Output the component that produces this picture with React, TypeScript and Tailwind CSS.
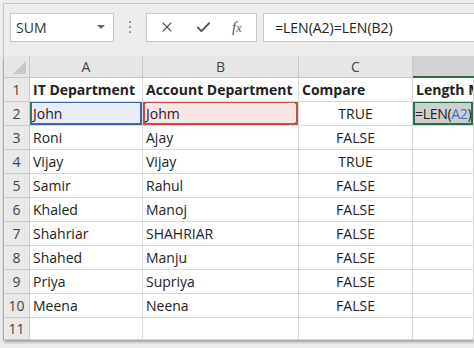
import { X, Check } from "lucide-react";

const rows: [string, string, string][] = [
  ["John", "Johm", "TRUE"],
  ["Roni", "Ajay", "FALSE"],
  ["Vijay", "Vijay", "TRUE"],
  ["Samir", "Rahul", "FALSE"],
  ["Khaled", "Manoj", "FALSE"],
  ["Shahriar", "SHAHRIAR", "FALSE"],
  ["Shahed", "Manju", "FALSE"],
  ["Priya", "Supriya", "FALSE"],
  ["Meena", "Neena", "FALSE"],
  ["", "", ""],
];

const cols = "grid grid-cols-[26px_113px_156px_114px_1fr]";
const cell = "border-r border-b border-[#d8d8d8] flex items-center px-[3px] whitespace-nowrap overflow-hidden";
const rowHead = "border-r border-b border-[#c8c8c8] bg-[#e9e9e9] flex items-center justify-center text-[#444]";

function Handle({ pos }: { pos: string }) {
  return <span className={`absolute w-[5px] h-[5px] bg-[#c0504d] ${pos}`} />;
}

export default function App() {
  return (
    <div
      className="w-[474px] h-[348px] overflow-hidden bg-[#ececec] pt-[3px] pl-[3px] text-[14px] text-[#222]"
      style={{ fontFamily: '"Open Sans", "Noto Sans", sans-serif' }}
    >
      <div className="border-t border-l border-[#c4c4c4] bg-[#ececec]">
        {/* formula bar */}
        <div className="flex items-center h-[52px] pl-[6px] pb-[6px]">
          <div className="w-[104px] h-[29px] bg-white border border-[#c6c6c6] flex items-center justify-between pl-[5px] pr-[8px]">
            <span className="text-[#333]">SUM</span>
            <span className="w-0 h-0 border-l-[4px] border-r-[4px] border-t-[4px] border-l-transparent border-r-transparent border-t-[#666]" />
          </div>
          <div className="w-[32px] flex flex-col items-center gap-[3px]">
            <span className="w-[2px] h-[2px] bg-[#9a9a9a]" />
            <span className="w-[2px] h-[2px] bg-[#9a9a9a]" />
            <span className="w-[2px] h-[2px] bg-[#9a9a9a]" />
          </div>
          <div className="w-[111px] h-[29px] bg-white border border-[#c6c6c6] flex items-center pl-[12px] gap-[20px] text-[#555]">
            <X size={16} strokeWidth={1.6} />
            <Check size={17} strokeWidth={2.6} />
            <span
              className="italic text-[15px] text-[#555] leading-none"
              style={{ fontFamily: '"Liberation Serif", serif' }}
            >
              f<span className="text-[12px]">x</span>
            </span>
          </div>
          <div className="ml-[6px] flex-1 h-[29px] bg-white border border-[#c6c6c6] border-r-0 flex items-center pl-[11px] text-[#222]">
            =LEN(A2)=LEN(B2)
          </div>
        </div>

        {/* sheet */}
        <div className="shadow-[0_2px_3px_rgba(0,0,0,0.35)]">
          <div className={`${cols} h-[22px] text-[#444]`}>
            <div className="relative border-r border-b border-[#c8c8c8] bg-[#e6e6e6]">
              <span className="absolute right-[3px] bottom-[3px] w-0 h-0 border-b-[13px] border-l-[13px] border-b-[#c8c8c8] border-l-transparent" />
            </div>
            <div className="border-r border-b border-[#c8c8c8] bg-[#e6e6e6] flex items-center justify-center">A</div>
            <div className="border-r border-b border-[#c8c8c8] bg-[#e6e6e6] flex items-center justify-center">B</div>
            <div className="border-r border-b border-[#c8c8c8] bg-[#e6e6e6] flex items-center justify-center">C</div>
            <div className="border-b-2 border-[#217346] bg-[#d2d2d2]" />
          </div>

          <div className={`${cols} h-[24px] font-bold`}>
            <div className={`${rowHead} font-normal`}>1</div>
            <div className={`${cell} bg-white`}>IT Department</div>
            <div className={`${cell} bg-white`}>Account Department</div>
            <div className={`${cell} bg-white`}>Compare</div>
            <div className={`${cell} bg-white`}>Length Match</div>
          </div>

          {rows.map((r, i) => {
            const n = i + 2;
            const last = n === 11;
            return (
              <div key={n} className={`${cols} ${last ? "h-[22px]" : "h-[24px]"}`}>
                <div className={rowHead}>{n}</div>
                {n === 2 ? (
                  <>
                    <div className={`${cell} relative bg-[#e8edf7]`}>
                      <span className="absolute inset-0 -top-[1px] border-2 border-[#3c65ae] border-l-[#2e7a6a]" />
                      {r[0]}
                    </div>
                    <div className={`${cell} relative bg-[#fbe6e6]`}>
                      <span className="absolute inset-0 -top-[1px] border-2 border-[#c0504d]" />
                      <Handle pos="-left-[2px] -top-[3px]" />
                      <Handle pos="-right-[2px] -top-[3px]" />
                      <Handle pos="-left-[2px] -bottom-[2px]" />
                      <Handle pos="-right-[2px] -bottom-[2px]" />
                      {r[1]}
                    </div>
                    <div className={`${cell} bg-white justify-center`}>{r[2]}</div>
                    <div className={`${cell} bg-white relative`}>
                      <span className="absolute inset-0 -top-[1px] border-2 border-[#217346]" />
                      <span className="bg-[#cfcfcf] -ml-[1px] tracking-[-0.3px]">
                        =LEN(<span className="text-[#3f6fc4]">A2</span>)
                      </span>
                    </div>
                  </>
                ) : (
                  <>
                    <div className={`${cell} bg-white`}>{r[0]}</div>
                    <div className={`${cell} bg-white`}>{r[1]}</div>
                    <div className={`${cell} bg-white justify-center`}>{r[2]}</div>
                    <div className={`${cell} bg-white`} />
                  </>
                )}
              </div>
            );
          })}
        </div>
      </div>
    </div>
  );
}
